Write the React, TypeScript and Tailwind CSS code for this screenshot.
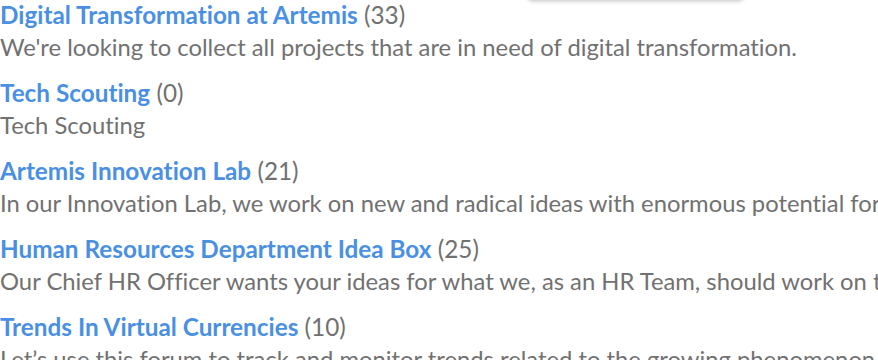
const communities = [
  {
    name: 'Digital Transformation at Artemis',
    count: 33,
    description: "We're looking to collect all projects that are in need of digital transformation.",
  },
  { name: 'Tech Scouting', count: 0, description: 'Tech Scouting' },
  {
    name: 'Artemis Innovation Lab',
    count: 21,
    description:
      'In our Innovation Lab, we work on new and radical ideas with enormous potential for the future of our company.',
  },
  {
    name: 'Human Resources Department Idea Box',
    count: 25,
    description:
      'Our Chief HR Officer wants your ideas for what we, as an HR Team, should work on to make Artemis a better place to work.',
  },
  {
    name: 'Trends In Virtual Currencies',
    count: 10,
    description:
      'Let’s use this forum to track and monitor trends related to the growing phenomenon of virtual currencies.',
  },
];

export default function App() {
  return (
    <div
      className="relative h-[360px] w-[878px] overflow-hidden bg-white [font-variant-ligatures:none]"
      style={{ fontFamily: 'Lato, "Open Sans", sans-serif' }}
    >
      {/* dropdown edge peeking from above */}
      <div className="absolute left-[528px] top-[-20px] h-[20px] w-[215px] rounded-b bg-white shadow-[0_1px_4px_rgba(0,0,0,0.25)]" />

      <ul className="flex flex-col gap-4 pt-[2px]">
        {communities.map((c) => (
          <li key={c.name} className="whitespace-nowrap">
            <div className="text-[24.3px] leading-[26px]">
              <a href="#" className="font-bold text-[#4a90e2]">
                {c.name}
              </a>{' '}
              <span className="text-[#717171]">({c.count})</span>
            </div>
            <p className="mt-[3px] text-[23.8px] leading-[33px] text-[#717171]">{c.description}</p>
          </li>
        ))}
      </ul>
    </div>
  );
}
